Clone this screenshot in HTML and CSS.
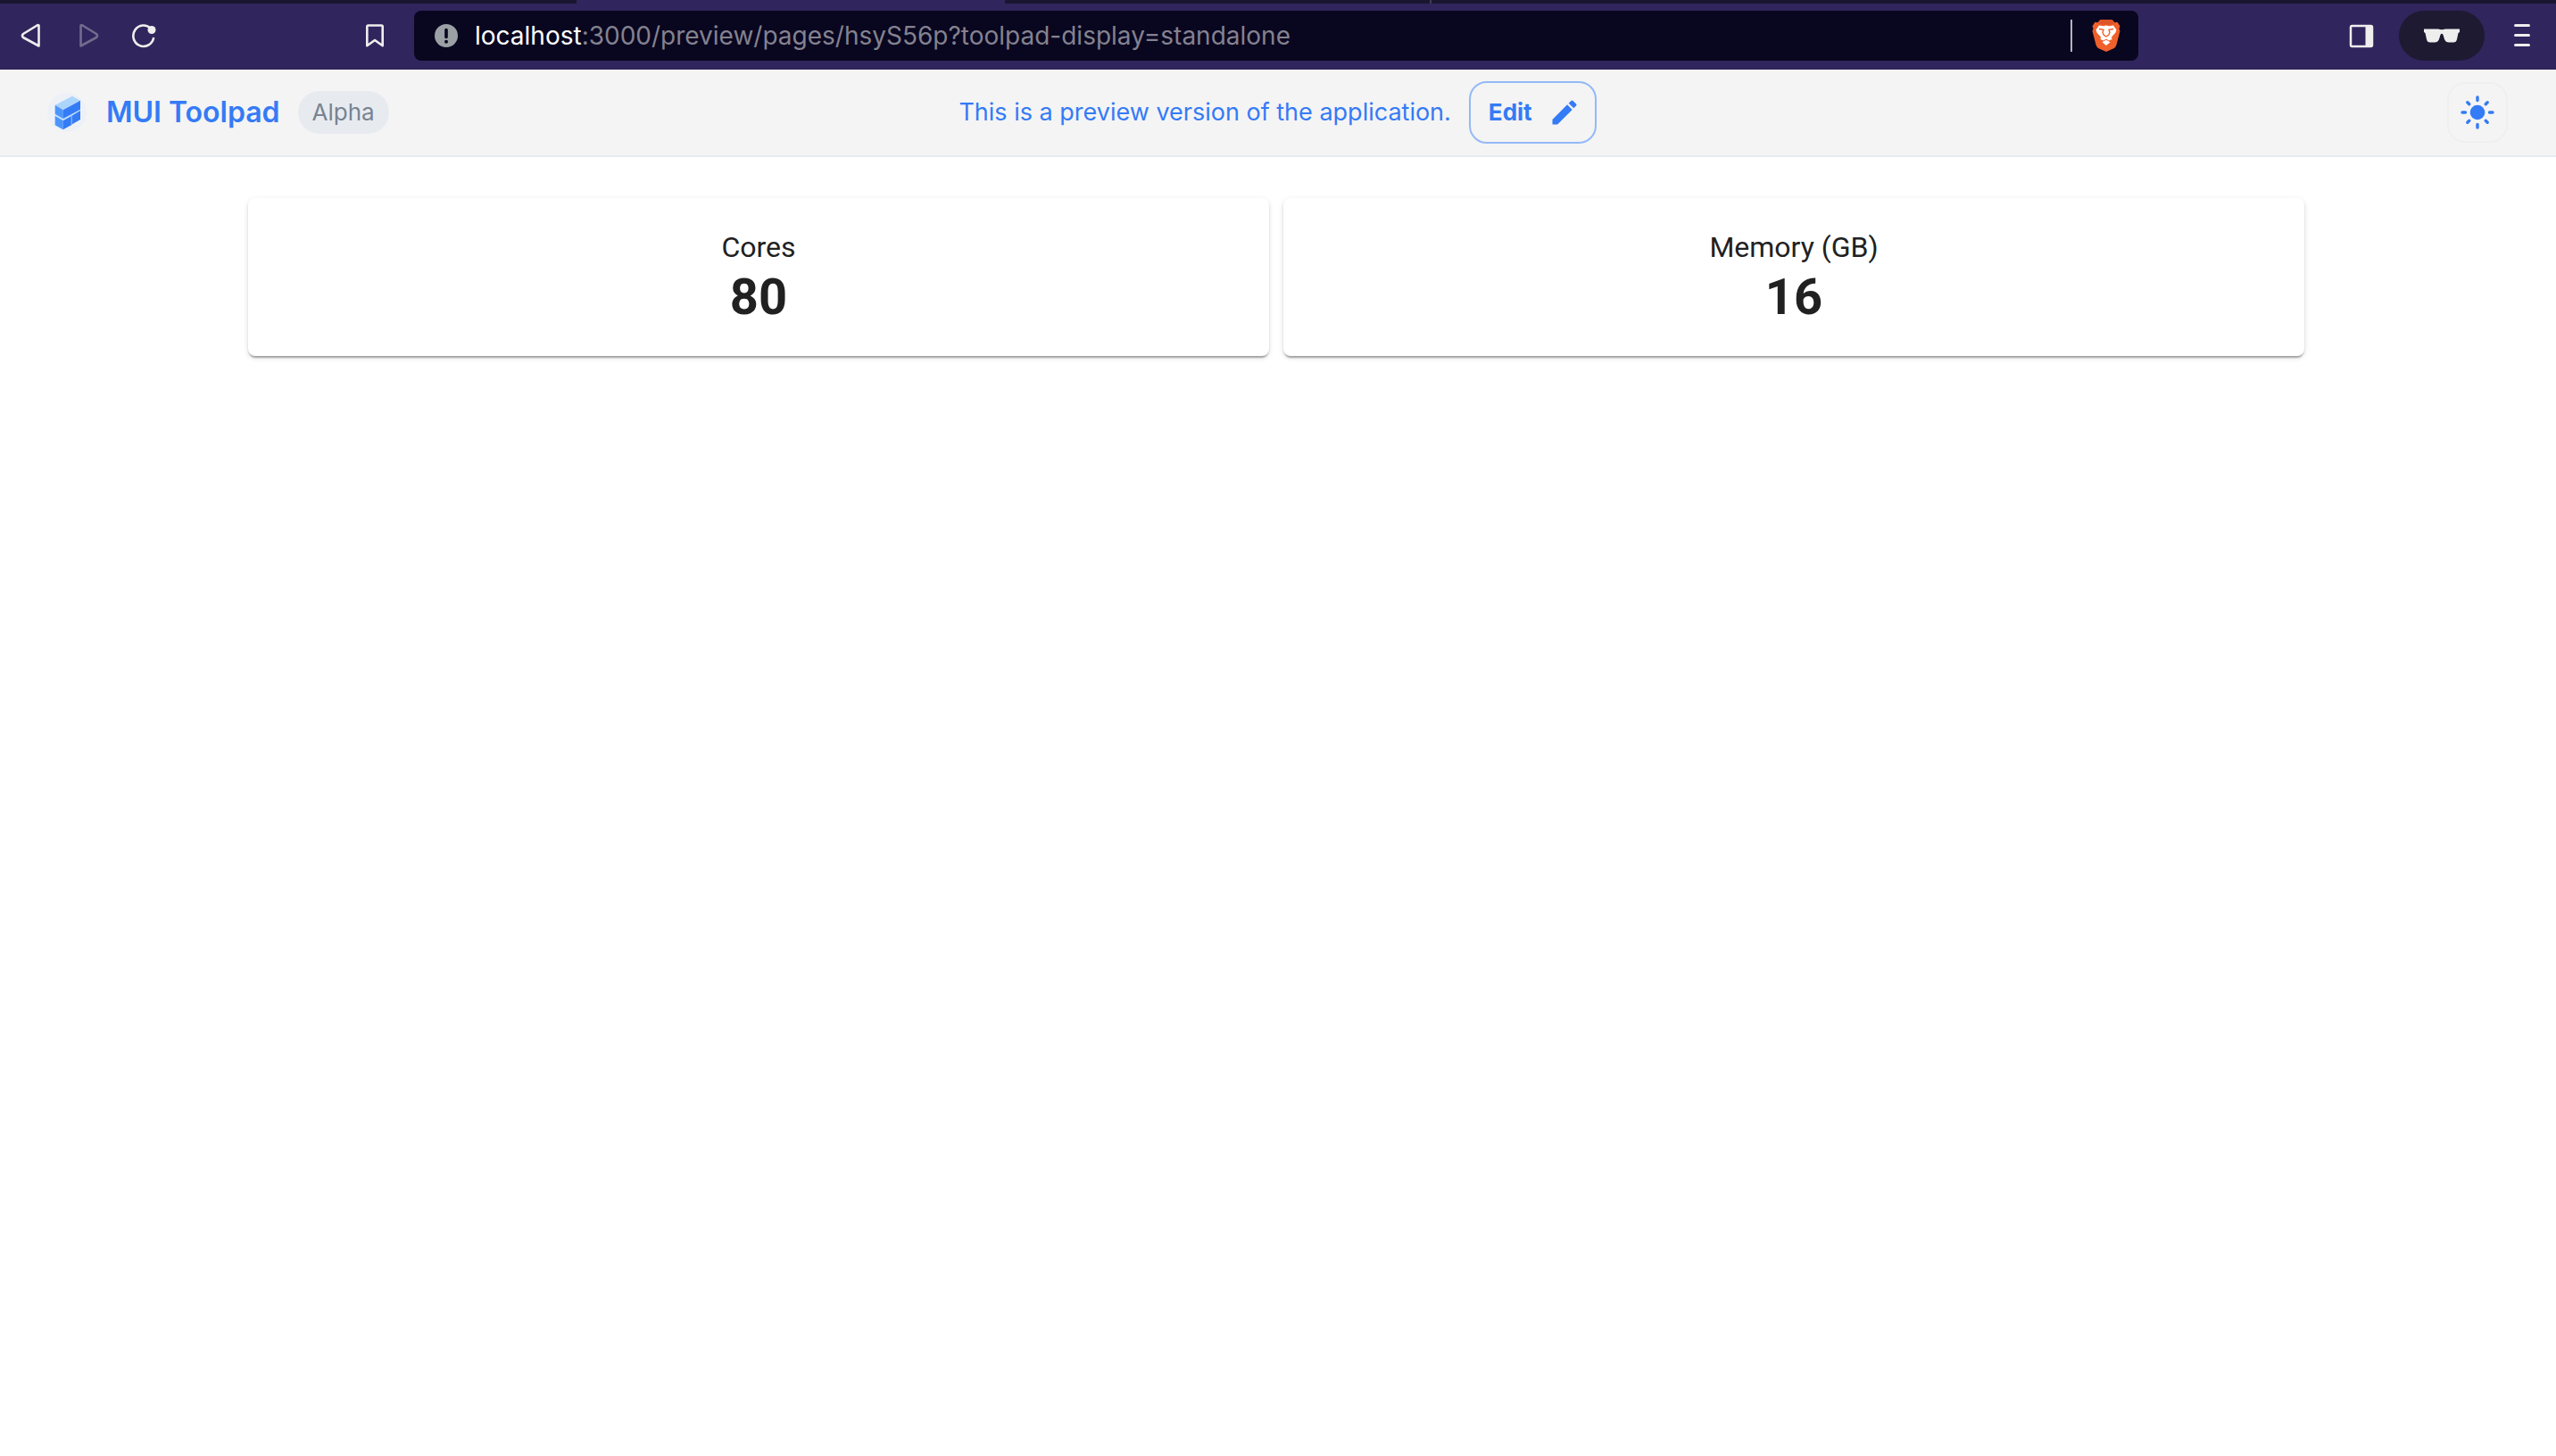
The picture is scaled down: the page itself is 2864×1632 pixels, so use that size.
FILE: index.html
```html
<!DOCTYPE html>
<html lang="en">
<head>
<meta charset="utf-8">
<meta name="viewport" content="width=device-width, initial-scale=1">
<title>MUI Toolpad</title>
<link rel="stylesheet" href="styles.css">
</head>
<body>
<div class="browser">
  <div class="tabs"><span class="tab tab-before"></span><span class="tab tab-active"></span><span class="tab tab-after"></span><span class="tab tab-rest"></span></div>
  <div class="toolbar">
    <div class="nav">
      <button class="tool" aria-label="Back"><svg width="28" height="28" viewBox="0 0 28 28"><path d="M20.500 2.500v23L3 16q-2-2 0-4L18.500 2.500q2-1 2 1z" fill="none" stroke="#eee" stroke-width="2.600" stroke-linejoin="round"/></svg></button>
      <button class="tool dim" aria-label="Forward" disabled><svg width="28" height="28" viewBox="0 0 28 28"><path d="M5.500 2.500v23L23 16q2-2 0-4L7.500 2.500q-2-1-2 1z" fill="none" stroke="#eee" stroke-width="2.600" stroke-linejoin="round"/></svg></button>
      <button class="tool" aria-label="Reload"><svg width="28" height="28" viewBox="0 0 28 28"><path d="M22 6A11.500 11.700 0 1 0 25 17" fill="none" stroke="#eee" stroke-width="2.600" stroke-linecap="round"/><circle cx="23" cy="7.500" r="4.500" fill="#eee"/></svg></button>
    </div>
    <button class="tool" aria-label="Bookmark"><svg width="28" height="28" viewBox="0 0 28 28"><path d="M6.500 2.500h15q1.200 0 1.200 1.200v21.500L14 19l-8.700 6.200V3.700q0-1.200 1.200-1.200z" fill="none" stroke="#eee" stroke-width="2.600" stroke-linejoin="round"/></svg></button>
    <div class="address">
      <svg width="26" height="26" viewBox="0 0 26 26"><circle cx="13" cy="13" r="13" fill="#9aa0a4"/><path d="M13 6.500v8" stroke="#090620" stroke-width="3.600" stroke-linecap="round"/><circle cx="13" cy="19.700" r="2" fill="#090620"/></svg>
      <span class="url"><span class="host">localhost</span>:3000/preview/pages/hsyS56p?toolpad-display=standalone</span>
      <button class="shield" aria-label="Brave Shields"><svg width="32" height="36" viewBox="0 0 32 36"><path d="M9.500 0h13l3 3.200 3-.4 3 4.500-1 3 1 2.500-4 15.500q-.8 2.500-3 4L16 36l-8.500-3.700q-2.200-1.500-3-4L.5 12.800l1-2.500-1-3 3-4.500 3 .4z" fill="#f0602b"/><path d="M9.500 0h13l3 3.200-3 2.300H9.500l-3-2.300z" fill="#dc5427"/><path d="M8 6.500l5 .8 3-.8 3 .8 5-.8 3.500 5-1 3-4.500 5 .5 2.500-3.500 1.500L16 21.500l-3 2L9.500 22l.5-2.500-4.500-5-1-3z" fill="#fff"/><path d="M16 22.800l4.500 2.400L16 29l-4.500-3.800z" fill="#fff"/><path d="M8 10.500l5 .8-1 3 1.300 3L16 19l2.700-1.700 1.300-3-1-3 5-.8" fill="none" stroke="#f0602b" stroke-width="1.400"/></svg></button>
    </div>
    <div class="actions">
      <button class="tool" aria-label="Side panel"><svg width="28" height="28" viewBox="0 0 28 28"><rect x="2" y="3" width="24" height="23" rx="1.500" fill="none" stroke="#eee" stroke-width="2.500"/><path d="M18.500 2H26v25h-7.500z" fill="#eee"/></svg></button>
      <button class="private" aria-label="Private window"><svg width="40" height="16" viewBox="0 0 40 16"><path d="M0 .5h16q4 1.500 8 0h16v3.500l-1.500 1-1.500 7q-.7 3.500-4 3.500h-5q-3.500 0-5-3.500l-1.500-5q-1.500-2.500-3 0l-1.500 5q-1.500 3.500-5 3.500H7q-3.300 0-4-3.500L1.500 5 0 4z" fill="#eee"/></svg></button>
      <button class="tool" aria-label="Menu"><svg width="28" height="28" viewBox="0 0 28 28"><path d="M6.500 2.500h15M6.500 13.500h15M6.500 24.500h15" stroke="#eee" stroke-width="3" stroke-linecap="round"/></svg></button>
    </div>
  </div>
</div>
<header class="appbar">
  <div class="brand">
    <a class="home" href="#"><svg width="44" height="44" viewBox="0 0 44 44"><circle cx="22" cy="22" r="22" fill="#edf1f7"/><path d="M8.700 23v4l9 5 19.300-11v-4z" fill="#c5e0fc"/><path d="M8.700 13.700L28 3.700l9 5-19.300 10.600z" fill="#acd5fb"/><path d="M8.700 13.700l9 5.600V29l-9-5.300zM8.700 26l9 5.300v10l-9-5z" fill="#4c95fb"/><path d="M26 25.500h2v10.300l-2 1z" fill="#8cbcfc"/><path d="M17.700 19.300L37 8.700v10L17.700 29zM17.700 31.300l9-5v10l-9 5zM27.900 25.400L37 20v10l-9.100 5.300z" fill="#347bf6"/></svg><span class="name">MUI Toolpad</span></a>
    <span class="chip">Alpha</span>
  </div>
  <div class="notice">
    <span>This is a preview version of the application.</span>
    <button class="edit">Edit<svg width="36" height="36" viewBox="0 0 24 24"><path d="M3 17.250V21h3.750L17.810 9.940l-3.750-3.750L3 17.250zM20.710 7.040c.39-.39.39-1.020 0-1.410l-2.340-2.340a.9959.9959 0 0 0-1.410 0l-1.830 1.830 3.750 3.750 1.830-1.830z" fill="#347bf6"/></svg></button>
  </div>
  <div class="end"><button class="theme" aria-label="Toggle theme"><svg width="38" height="38" viewBox="0 0 38 38"><circle cx="19" cy="19" r="8.300" fill="#347bf6"/><path d="M19 2v3.500M19 32.500V36M2 19h3.500M32.500 19H36M7.800 7.800l2 2M28.200 28.200l2 2M7.800 30.200l2-2M28.200 9.800l2-2" stroke="#347bf6" stroke-width="3.400" stroke-linecap="round"/></svg></button></div>
</header>
<main class="page">
  <div class="grid">
    <section class="card"><h2>Cores</h2><p>80</p></section>
    <section class="card"><h2>Memory (GB)</h2><p>16</p></section>
  </div>
</main>
</body>
</html>
```
FILE: styles.css
```css
* { box-sizing: border-box; }
body { margin: 0; background: #fff; color: #212121; font-family: Inter, "Liberation Sans", sans-serif; }
button { margin: 0; padding: 0; border: 0; background: none; font: inherit; color: inherit; }
svg { display: block; flex: none; }

.browser { background: #30255c; }
.tabs { display: flex; height: 4px; }
.tab { background: #1a162f; }
.tab-before { width: 646px; }
.tab-active { width: 480px; background: #30255c; }
.tab-after { width: 478px; border-right: 2px solid #3f3b52; }
.tab-rest { flex: 1; }
.toolbar { display: flex; align-items: center; padding: 8px 24px 10px 23px; }
.nav { display: flex; gap: 34px; margin-right: 231px; }
.tool { width: 28px; height: 28px; }
.dim { opacity: .35; }
.address { flex: 1; display: flex; align-items: center; height: 56px; margin-left: 30px; padding: 0 20px 0 23px; border-radius: 8px; background: #090620; }
.url { flex: 1; margin-left: 19px; font-size: 28px; line-height: 36px; color: #84828f; }
.host { color: #fff; }
.shield { padding-left: 22px; border-left: 2px solid #b5b4bc; }
.actions { display: flex; align-items: center; gap: 28px; margin-left: 236px; }
.private { display: flex; align-items: center; justify-content: center; width: 96px; height: 56px; border-radius: 28px; background: #1d1a32; }

.appbar { display: grid; grid-template-columns: 1fr auto 1fr; align-items: center; height: 98px; padding: 0 54px 0 53px; border-bottom: 2px solid #e7ebf0; background: #f4f4f4; color: #347bf6; }
.brand, .home, .notice { display: flex; align-items: center; }
.brand { gap: 20px; }
.home { gap: 22px; color: inherit; text-decoration: none; }
.name { font-size: 32px; line-height: 48px; font-weight: 600; }
.chip { padding: 0 16px; border-radius: 24px; background: #e7ebf0; color: #78838f; font-size: 26px; line-height: 48px; }
.notice { gap: 20px; font-size: 27px; line-height: 36px; }
.edit { display: flex; align-items: center; gap: 18px; height: 70px; padding: 0 16px 0 20px; border: 2px solid #93b9f8; border-radius: 20px; font-size: 26px; font-weight: 700; }
.end { display: flex; justify-content: flex-end; }
.theme { display: grid; place-items: center; width: 68px; height: 68px; border: 2px solid #efefef; border-radius: 20px; }

.page { padding: 46px 4px 46px 0; }
.grid { display: grid; grid-template-columns: 1fr 1fr; gap: 16px; max-width: 2304px; margin: 0 auto; }
.card { padding: 35px 32px 30px; border-radius: 8px; background: #fff; text-align: center; font-family: Roboto, sans-serif; box-shadow: 0 4px 2px -2px rgba(0,0,0,.2), 0 2px 2px rgba(0,0,0,.14), 0 2px 6px rgba(0,0,0,.12); }
.card h2 { margin: 0; font-size: 32px; line-height: 40px; font-weight: 400; }
.card p { margin: 0; font-size: 56px; line-height: 72px; font-weight: 700; }
```
